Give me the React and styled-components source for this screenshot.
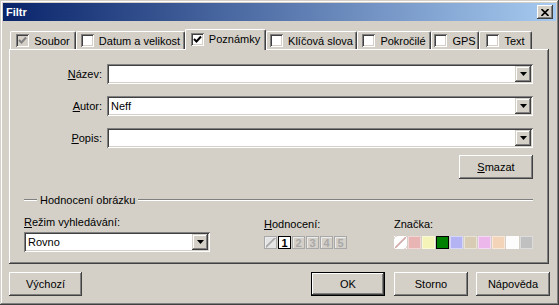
import React from 'react';
import styled, { createGlobalStyle } from 'styled-components';

const TABS = [
  { id: 1, label: 'Soubor', width: 66, checked: true, disabled: true },
  { id: 2, label: 'Datum a velikost', width: 109 },
  { id: 3, label: 'Poznámky', width: 81, checked: true, active: true },
  { id: 4, label: 'Klíčová slova', width: 91 },
  { id: 5, label: 'Pokročilé', width: 74 },
  { id: 6, label: 'GPS', width: 48 },
  { id: 7, label: 'Text', width: 53 },
];

const FIELDS = [
  { id: 'n', key: 'N', rest: 'ázev:', value: '' },
  { id: 'a', key: 'A', rest: 'utor:', value: 'Neff' },
  { id: 'p', key: 'P', rest: 'opis:', value: '' },
];

const SWATCHES = [
  'none',
  '#e8b4b4',
  '#f4f4b8',
  '#008000',
  '#b4b4f4',
  '#d8ccb4',
  '#ecb8ec',
  '#f4d4b8',
  '#fcfcfc',
  '#c0c0c0',
];

const raised = `
  box-shadow: inset -1px -1px #404040, inset 1px 1px #ffffff,
    inset -2px -2px #808080, inset 2px 2px #d4d0c8;
`;

const sunken = `
  box-shadow: inset 1px 1px #808080, inset -1px -1px #ffffff,
    inset 2px 2px #404040, inset -2px -2px #d4d0c8;
`;

const Arrow = () => (
  <svg width="7" height="4" viewBox="0 0 7 4">
    <polygon points="0,0 7,0 3.5,4" fill="#000" />
  </svg>
);

const Check = ({ color }) => (
  <svg width="9" height="9" viewBox="0 0 9 9">
    <polyline points="1,4 3.5,6.5 8,1.5" fill="none" stroke={color} strokeWidth="2" />
  </svg>
);

const Combo = ({ value, width }) => (
  <Field $w={width}>
    <FieldText>{value}</FieldText>
    <DropBt>
      <Arrow />
    </DropBt>
  </Field>
);

const App = () => {
  return (
    <>
      <GlobalStyle />
      <Window>
        <TitleBar>
          <Title>Filtr</Title>
          <CloseBt>
            <svg width="8" height="7" viewBox="0 0 8 7">
              <path d="M0.5 0 L7.5 7 M7.5 0 L0.5 7" stroke="#000" strokeWidth="1.6" />
            </svg>
          </CloseBt>
        </TitleBar>

        <TabStrip>
          {TABS.map(tab => (
            <Tab key={tab.id} $w={tab.width} $active={tab.active}>
              <CheckBox $disabled={tab.disabled}>
                {tab.checked && <Check color={tab.disabled ? '#808080' : '#000'} />}
              </CheckBox>
              {tab.label}
            </Tab>
          ))}
        </TabStrip>

        <Panel>
          <FormGrid>
            {FIELDS.map(f => (
              <React.Fragment key={f.id}>
                <Label>
                  <U>{f.key}</U>
                  {f.rest}
                </Label>
                <Combo value={f.value} />
              </React.Fragment>
            ))}
          </FormGrid>

          <ClearRow>
            <Button $w={74}>
              <U>S</U>mazat
            </Button>
          </ClearRow>

          <GroupHead>
            <GroupLine $w={13} />
            <GroupTitle>Hodnocení obrázku</GroupTitle>
            <GroupLine />
          </GroupHead>

          <RatingGrid>
            <Column>
              <SmallLabel>
                <U>R</U>ežim vyhledávání:
              </SmallLabel>
              <Combo value="Rovno" width={186} />
            </Column>
            <Column $offset={2}>
              <SmallLabel>
                <U>H</U>odnocení:
              </SmallLabel>
              <BoxRow>
                <RateBox $slash />
                {[1, 2, 3, 4, 5].map(n => (
                  <RateBox key={n} $active={n === 1}>
                    {n}
                  </RateBox>
                ))}
              </BoxRow>
            </Column>
            <Column $offset={2}>
              <SmallLabel>Značka:</SmallLabel>
              <BoxRow>
                {SWATCHES.map((c, i) => (
                  <Swatch key={i} $color={c} $active={i === 3} />
                ))}
              </BoxRow>
            </Column>
          </RatingGrid>
        </Panel>

        <Footer>
          <Button $w={73}>Výchozí</Button>
          <Spacer />
          <Button $w={74} $default>
            OK
          </Button>
          <Button $w={74} $ml={9}>
            Storno
          </Button>
          <Button $w={74} $ml={8}>
            Nápověda
          </Button>
        </Footer>
      </Window>
    </>
  );
};

const GlobalStyle = createGlobalStyle`
  body {
    margin: 0;
    background: #d4d0c8;
    font-family: "Liberation Sans", Arial, sans-serif;
    font-size: 11px;
    color: #000;
  }
`;

const Window = styled.div`
  width: 559px;
  height: 305px;
  box-sizing: border-box;
  padding: 3px;
  background: #d4d0c8;
  box-shadow: inset -1px -1px #404040, inset 1px 1px #d4d0c8,
    inset -2px -2px #808080, inset 2px 2px #ffffff;
  display: flex;
  flex-direction: column;
`;

const TitleBar = styled.div`
  height: 18px;
  display: flex;
  align-items: center;
  justify-content: space-between;
  padding: 0 3px 0 3px;
  background: linear-gradient(to right, #0a246a, #a6caf0);
`;

const Title = styled.span`
  color: #fff;
  font-weight: bold;
  font-size: 11px;
`;

const CloseBt = styled.div`
  width: 16px;
  height: 14px;
  display: flex;
  align-items: center;
  justify-content: center;
  background: #d4d0c8;
  ${raised}
`;

const TabStrip = styled.div`
  display: flex;
  align-items: flex-end;
  height: 20px;
  margin-top: 8px;
  padding-left: 7px;
`;

const Tab = styled.div`
  position: relative;
  z-index: ${p => (p.$active ? 1 : 0)};
  width: ${p => p.$w}px;
  height: ${p => (p.$active ? 21 : 18)}px;
  margin-bottom: ${p => (p.$active ? -1 : 0)}px;
  box-sizing: border-box;
  display: flex;
  align-items: center;
  justify-content: center;
  gap: 5px;
  padding-bottom: ${p => (p.$active ? 2 : 0)}px;
  background: #d4d0c8;
  border-top: 1px solid #fff;
  border-left: 1px solid #fff;
  border-right: 1px solid #404040;
  border-radius: 2px 2px 0 0;
  box-shadow: inset -1px 0 #808080;
  white-space: nowrap;
`;

const CheckBox = styled.span`
  width: 13px;
  height: 13px;
  flex: none;
  display: flex;
  align-items: center;
  justify-content: center;
  background: ${p => (p.$disabled ? '#d4d0c8' : '#fff')};
  ${sunken}
`;

const Panel = styled.div`
  height: 215px;
  margin: 0 7px 0 6px;
  box-sizing: border-box;
  padding: 15px 16px 0 15px;
  box-shadow: inset -1px -1px #404040, inset 1px 1px #ffffff,
    inset -2px -2px #808080;
`;

const FormGrid = styled.div`
  display: grid;
  grid-template-columns: 78px 1fr;
  grid-auto-rows: 20px;
  column-gap: 5px;
  row-gap: 12px;
`;

const Label = styled.label`
  align-self: center;
  text-align: right;
`;

const U = styled.span`
  text-decoration: underline;
`;

const Field = styled.div`
  width: ${p => (p.$w ? `${p.$w}px` : 'auto')};
  height: 20px;
  box-sizing: border-box;
  display: flex;
  align-items: center;
  padding: 2px;
  background: #fff;
  ${sunken}
`;

const FieldText = styled.span`
  flex: 1;
  padding-left: 2px;
`;

const DropBt = styled.div`
  width: 16px;
  height: 16px;
  display: flex;
  align-items: center;
  justify-content: center;
  background: #d4d0c8;
  box-shadow: inset -1px -1px #404040, inset 1px 1px #d4d0c8,
    inset -2px -2px #808080, inset 2px 2px #ffffff;
`;

const ClearRow = styled.div`
  display: flex;
  justify-content: flex-end;
  margin-top: 7px;
`;

const Button = styled.div`
  width: ${p => p.$w}px;
  height: 24px;
  margin-left: ${p => p.$ml || 0}px;
  box-sizing: border-box;
  display: flex;
  align-items: center;
  justify-content: center;
  background: #d4d0c8;
  border: ${p => (p.$default ? '1px solid #000' : 'none')};
  ${raised}
`;

const GroupHead = styled.div`
  display: flex;
  align-items: center;
  height: 13px;
  margin-top: 14px;
`;

const GroupLine = styled.div`
  width: ${p => (p.$w ? `${p.$w}px` : 'auto')};
  flex: ${p => (p.$w ? 'none' : 1)};
  height: 0;
  border-top: 1px solid #808080;
  border-bottom: 1px solid #fff;
`;

const GroupTitle = styled.span`
  padding: 0 3px;
`;

const RatingGrid = styled.div`
  display: grid;
  grid-template-columns: 240px 130px 1fr;
  margin-top: 10px;
`;

const Column = styled.div`
  display: flex;
  flex-direction: column;
  gap: 3px;
  padding-top: ${p => p.$offset || 0}px;
`;

const SmallLabel = styled.span`
  line-height: 13px;
`;

const BoxRow = styled.div`
  display: flex;
  gap: 1px;
  margin-top: 2px;
`;

const RateBox = styled.div`
  width: 13px;
  height: 13px;
  box-sizing: border-box;
  display: flex;
  align-items: center;
  justify-content: center;
  font-weight: bold;
  font-size: 11px;
  border: 1px solid ${p => (p.$active ? '#000' : '#a8a8a8')};
  color: ${p => (p.$active ? '#000' : '#a8a8a8')};
  background: ${p =>
    p.$slash
      ? 'linear-gradient(to bottom right, #e4e4e4 44%, #a8a8a8 46%, #a8a8a8 54%, #e4e4e4 56%)'
      : p.$active
      ? '#fff'
      : '#d4d0c8'};
  box-shadow: ${p => (p.$active ? 'none' : 'inset 1px 1px #ececec')};
`;

const Swatch = styled.div`
  width: 13px;
  height: 13px;
  box-sizing: border-box;
  background: ${p =>
    p.$color === 'none'
      ? 'linear-gradient(to bottom right, #fff 44%, #e0a8a8 46%, #c8b0b0 54%, #fff 56%)'
      : p.$color};
  border: 1px solid ${p => (p.$active ? '#000' : 'rgba(255,255,255,0.45)')};
`;

const Footer = styled.div`
  display: flex;
  margin: 8px 6px 0 6px;
`;

const Spacer = styled.div`
  flex: 1;
`;

export default App;
